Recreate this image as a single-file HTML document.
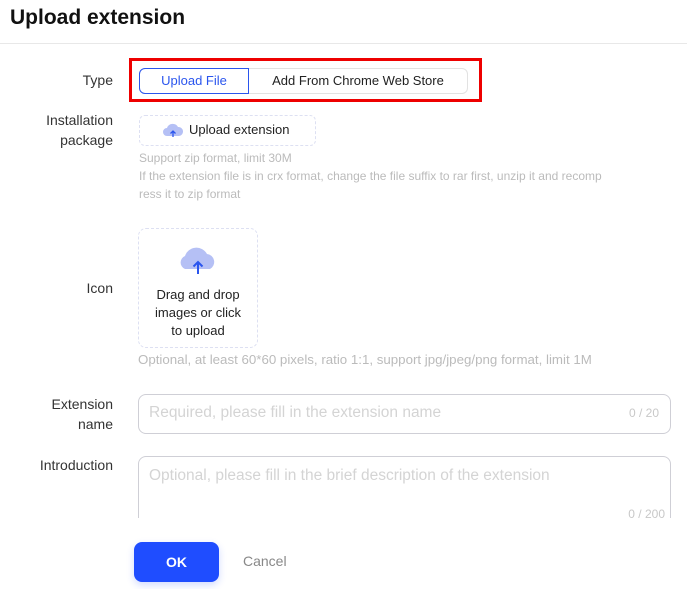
<!DOCTYPE html>
<html><head><meta charset="utf-8"><style>
*{margin:0;padding:0;box-sizing:border-box}
body{width:687px;height:589px;overflow:hidden;background:#fff;font-family:"Liberation Sans",sans-serif;position:relative;color:#222}
.a{position:absolute;white-space:nowrap}
.lbl{position:absolute;right:574px;font-size:14px;color:#333;text-align:right;line-height:20px}
.hint{font-size:12px;color:#bbb}
</style></head><body>
<div class="a" style="left:10px;top:6px;font-size:21px;font-weight:bold;color:#111">Upload extension</div>
<div class="a" style="left:0;top:43px;width:687px;height:1px;background:#e8e8e8"></div>

<div class="lbl" style="top:70px">Type</div>
<div class="a" style="left:129px;top:58px;width:353px;height:44px;border:3px solid #ee0000"></div>
<div class="a" style="left:139px;top:68px;width:329px;height:26px;border:1px solid #e2e2e2;border-radius:6px"></div>
<div class="a" style="left:139px;top:68px;width:110px;height:26px;border:1px solid #2a55ee;border-radius:6px 0 0 6px;color:#2a55ee;font-size:13px;text-align:center;line-height:24px">Upload File</div>
<div class="a" style="left:249px;top:68px;width:218px;height:26px;font-size:13px;text-align:center;line-height:26px;color:#222">Add From Chrome Web Store</div>

<div class="lbl" style="top:110px">Installation<br>package</div>
<div class="a" style="left:139px;top:115px;width:177px;height:31px;border:1px dashed #dde0f2;border-radius:6px"></div>
<svg class="a" style="left:162px;top:121px" width="22" height="18" viewBox="0 0 22 18"><path d="M5 15a4 4 0 0 1 0-8a6 6 0 0 1 11-1a4.5 4.5 0 0 1 1 9z" fill="#b5c0f5"/><path d="M11 16V10M8.5 12.5L11 10l2.5 2.5" stroke="#2a55ee" stroke-width="1.3" fill="none"/></svg>
<div class="a" style="left:189px;top:122px;font-size:13px;color:#222">Upload extension</div>
<div class="a hint" style="left:139px;top:151px">Support zip format, limit 30M</div>
<div class="a hint" style="left:139px;top:169px">If the extension file is in crx format, change the file suffix to rar first, unzip it and recomp</div>
<div class="a hint" style="left:139px;top:187px">ress it to zip format</div>

<div class="lbl" style="top:278px">Icon</div>
<div class="a" style="left:138px;top:228px;width:120px;height:120px;border:1px dashed #dde0f2;border-radius:8px"></div>
<svg class="a" style="left:176px;top:245px" width="44" height="33" viewBox="0 0 44 33"><path d="M9 24a7 7 0 0 1 0-13a12 12 0 0 1 22-2a8 8 0 0 1 3 15z" fill="#b5c0f5"/><path d="M22 29V17M17.5 21.5L22 17l4.5 4.5" stroke="#2a55ee" stroke-width="2" fill="none"/></svg>
<div class="a" style="left:138px;top:286px;width:120px;text-align:center;font-size:13px;line-height:18px;white-space:normal;color:#222">Drag and drop<br>images or click<br>to upload</div>
<div class="a" style="left:138px;top:352px;font-size:13.3px;color:#bbb">Optional, at least 60*60 pixels, ratio 1:1, support jpg/jpeg/png format, limit 1M</div>

<div class="lbl" style="top:394px">Extension<br>name</div>
<div class="a" style="left:138px;top:394px;width:533px;height:40px;border:1px solid #cfcfd6;border-radius:8px"></div>
<div class="a" style="left:149px;top:404px;font-size:15.5px;color:#d4d4d4">Required, please fill in the extension name</div>
<div class="a" style="right:28px;top:406px;font-size:12px;color:#c8c8c8">0 / 20</div>

<div class="lbl" style="top:455px">Introduction</div>
<div style="position:absolute;left:0;top:455px;width:687px;height:63px;overflow:hidden">
<div class="a" style="left:138px;top:1px;width:533px;height:80px;border:1px solid #cfcfd6;border-radius:8px"></div>
<div class="a" style="left:149px;top:12px;font-size:15.5px;color:#d4d4d4">Optional, please fill in the brief description of the extension</div>
<div class="a" style="right:22px;top:52px;font-size:12px;color:#c8c8c8">0 / 200</div>
</div>

<div class="a" style="left:134px;top:542px;width:85px;height:40px;background:#1f4dff;border-radius:8px;color:#fff;font-weight:bold;font-size:14px;text-align:center;line-height:40px;box-shadow:0 3px 8px rgba(31,77,255,.2)">OK</div>
<div class="a" style="left:243px;top:553px;font-size:14px;color:#888">Cancel</div>
</body></html>
